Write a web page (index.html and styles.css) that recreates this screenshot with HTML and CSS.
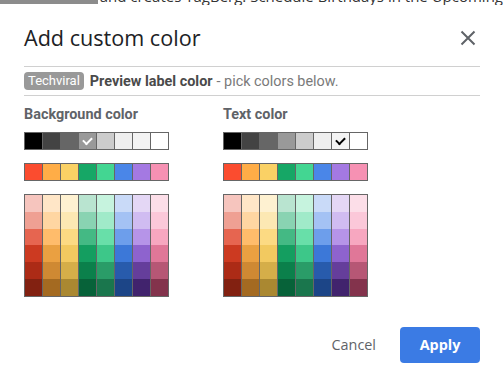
FILE: index.html
```html
<!DOCTYPE html>
<html lang="en">
<head>
    <meta charset="UTF-8">
    <title>Add custom color</title>
    <link rel="stylesheet" href="styles.css">
</head>
<body>
    <!-- Page behind the dialog -->
    <div class="backdrop">
        <div class="backdrop-bar"></div>
        <div class="backdrop-text">and creates TagBerg. Schedule Birthdays in the Upcoming</div>
    </div>

    <div class="dialog">
        <div class="dialog-head">
            <h1>Add custom color</h1>
            <svg class="close" width="16" height="16" viewBox="0 0 16 16">
                <path d="M1.5 1.5 L14.5 14.5 M14.5 1.5 L1.5 14.5" stroke="#5f6368" stroke-width="2" fill="none"/>
            </svg>
        </div>

        <div class="preview">
            <span class="chip">Techviral</span>
            <strong>Preview label color</strong>
            <span class="hint">- pick colors below.</span>
        </div>

        <div class="pickers">
            <div class="picker">
                <h2>Background color</h2>
                <div class="swatch-row">
                    <span style="background:#000000"></span>
                    <span style="background:#434343"></span>
                    <span style="background:#666666"></span>
                    <span class="checked light" style="background:#999999"></span>
                    <span style="background:#cccccc"></span>
                    <span style="background:#efefef"></span>
                    <span style="background:#f3f3f3"></span>
                    <span style="background:#ffffff"></span>
                </div>
                <div class="swatch-row">
                    <span style="background:#fb4c2f"></span>
                    <span style="background:#ffad47"></span>
                    <span style="background:#fad165"></span>
                    <span style="background:#16a766"></span>
                    <span style="background:#43d692"></span>
                    <span style="background:#4a86e8"></span>
                    <span style="background:#a479e2"></span>
                    <span style="background:#f691b3"></span>
                </div>
                <div class="swatch-grid"></div>
            </div>

            <div class="picker">
                <h2>Text color</h2>
                <div class="swatch-row">
                    <span style="background:#000000"></span>
                    <span style="background:#434343"></span>
                    <span style="background:#666666"></span>
                    <span style="background:#999999"></span>
                    <span style="background:#cccccc"></span>
                    <span style="background:#efefef"></span>
                    <span class="checked dark" style="background:#f3f3f3"></span>
                    <span style="background:#ffffff"></span>
                </div>
                <div class="swatch-row">
                    <span style="background:#fb4c2f"></span>
                    <span style="background:#ffad47"></span>
                    <span style="background:#fad165"></span>
                    <span style="background:#16a766"></span>
                    <span style="background:#43d692"></span>
                    <span style="background:#4a86e8"></span>
                    <span style="background:#a479e2"></span>
                    <span style="background:#f691b3"></span>
                </div>
                <div class="swatch-grid"></div>
            </div>
        </div>

        <div class="actions">
            <button class="btn-text">Cancel</button>
            <button class="btn-primary">Apply</button>
        </div>
    </div>

    <script>
        // Gmail label palette, one column per hue
        var columns = [
            ['#f6c5be', '#efa093', '#e66550', '#cc3a21', '#ac2b16', '#822111'],
            ['#ffe6c7', '#ffd6a2', '#ffbc6b', '#eaa041', '#cf8933', '#a46a21'],
            ['#fef1d1', '#fce8b3', '#fcda83', '#f2c960', '#d5ae49', '#aa8831'],
            ['#b9e4d0', '#89d3b2', '#44b984', '#149e60', '#0b804b', '#076239'],
            ['#c6f3de', '#a0eac9', '#68dfa9', '#3dc789', '#2a9c68', '#1a764d'],
            ['#c9daf8', '#a4c2f4', '#6d9eeb', '#3c78d8', '#285bac', '#1c4587'],
            ['#e4d7f5', '#d0bcf1', '#b694e8', '#8e63ce', '#653e9b', '#41236d'],
            ['#fcdee8', '#fbc8d9', '#f7a7c0', '#e07798', '#b65775', '#83334c']
        ];
        document.querySelectorAll('.swatch-grid').forEach(function (grid) {
            columns.forEach(function (col) {
                var c = document.createElement('div');
                c.className = 'swatch-col';
                col.forEach(function (hex) {
                    var s = document.createElement('span');
                    s.style.background = hex;
                    c.appendChild(s);
                });
                grid.appendChild(c);
            });
        });
    </script>
</body>
</html>
```

FILE: styles.css
```css
* {
    margin: 0;
    padding: 0;
    box-sizing: border-box;
}

body {
    font-family: Roboto, 'Liberation Sans', Arial, sans-serif;
    background: #ffffff;
    width: 503px;
    height: 387px;
    overflow: hidden;
}

/* Strip of the page behind the dialog */
.backdrop {
    display: flex;
    height: 5px;
    overflow: hidden;
}

.backdrop-bar {
    width: 135px;
    height: 4px;
    background: #8c8c8c;
}

.backdrop-text {
    font-family: 'Open Sans', sans-serif;
    font-size: 15px;
    line-height: 15px;
    margin-top: -11px;
    margin-left: 2px;
    color: #333;
    white-space: nowrap;
}

.dialog {
    padding: 0 23px 0 24px;
}

.dialog-head {
    display: flex;
    justify-content: space-between;
    align-items: center;
    height: 61px;
    padding-top: 4px;
}

h1 {
    font-family: 'Open Sans', sans-serif;
    font-weight: 400;
    font-size: 21.6px;
    color: #202124;
}

.close {
    margin-right: 4px;
}

.preview {
    display: flex;
    align-items: center;
    gap: 6px;
    height: 30px;
    border-top: 1px solid #d0d0d0;
    border-bottom: 1px solid #d0d0d0;
    font-size: 14.4px;
    color: #5a5a5a;
}

.chip {
    background: #999999;
    color: #ffffff;
    font-size: 13px;
    line-height: 18px;
    padding: 0 4px;
    border-radius: 4px;
}

.preview strong {
    color: #4a4a4a;
}

.hint {
    color: #7a7a7a;
    margin-left: -2px;
}

.pickers {
    display: flex;
    gap: 54px;
    padding-top: 11px;
}

h2 {
    font-size: 14.4px;
    font-weight: 700;
    color: #5f6368;
    line-height: 16px;
    margin-bottom: 9px;
}

.swatch-row {
    display: flex;
    gap: 1px;
    padding: 1px;
    background: #666666;
    width: 145px;
    margin-bottom: 13px;
}

.swatch-row span {
    width: 17px;
    height: 16px;
    display: flex;
    align-items: center;
    justify-content: center;
}

.checked.light::after,
.checked.dark::after {
    content: '';
    width: 7px;
    height: 4px;
    border-left: 2px solid #ffffff;
    border-bottom: 2px solid #ffffff;
    transform: rotate(-45deg);
    margin-top: -2px;
}

.checked.dark::after {
    border-color: #000000;
}

.swatch-grid {
    display: flex;
    gap: 1px;
    padding: 1px;
    background: #666666;
    width: 145px;
}

.swatch-col {
    display: flex;
    flex-direction: column;
}

.swatch-col span {
    width: 17px;
    height: 16.8px;
}

.actions {
    display: flex;
    justify-content: flex-end;
    align-items: center;
    gap: 24px;
    margin-top: 30px;
}

.actions button {
    border: none;
    font-size: 14.4px;
    cursor: pointer;
}

.btn-text {
    background: none;
    color: #5f6368;
    font-family: 'Open Sans', sans-serif;
}

.btn-primary {
    background: #3b7be4;
    color: #ffffff;
    font-family: 'Open Sans', sans-serif;
    font-weight: 700;
    width: 80px;
    height: 36px;
    border-radius: 4px;
}
```
